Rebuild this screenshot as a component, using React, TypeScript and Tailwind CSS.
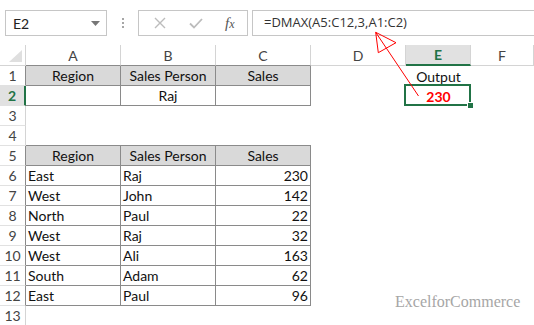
import React from 'react';

type Align = 'left' | 'center' | 'right';

interface CellDef {
    text?: string;
    align?: Align;
    head?: boolean;
    boxed?: boolean;
    edge?: boolean; // dark line under a cell sitting right above a table
}

const colWidths = ['w-[95px]', 'w-[95px]', 'w-[95px]', 'w-[95px]', 'w-[65px]', 'flex-1'];
const colLetters = ['A', 'B', 'C', 'D', 'E', 'F'];

const salesData = [
    { region: 'East', person: 'Raj', sales: 230 },
    { region: 'West', person: 'John', sales: 142 },
    { region: 'North', person: 'Paul', sales: 22 },
    { region: 'West', person: 'Raj', sales: 32 },
    { region: 'West', person: 'Ali', sales: 163 },
    { region: 'South', person: 'Adam', sales: 62 },
    { region: 'East', person: 'Paul', sales: 96 },
];

function alignClass(align?: Align) {
    if (align === 'center') return 'justify-center';
    if (align === 'right') return 'justify-end pr-[2px]';
    return 'justify-start pl-[2px]';
}

function Cell({ def, width }: { def: CellDef; width: string }) {
    let cls = `${width} shrink-0 flex items-center overflow-hidden whitespace-nowrap ${alignClass(def.align)}`;
    if (def.boxed) cls += ' border-r border-b border-[#8a8a8a]';
    if (def.head) cls += ' bg-[#d9d9d9]';
    if (def.edge) cls += ' border-b border-[#8a8a8a]';
    return <div className={cls}>{def.text}</div>;
}

function SheetRow({ n, cells, boxed, selected, children }: {
    n: number;
    cells: CellDef[];
    boxed?: boolean;
    selected?: boolean;
    children?: React.ReactNode;
}) {
    const hdr = selected
        ? 'bg-[#e1e1e1] text-[#217346] font-bold border-r-2 border-r-[#217346]'
        : boxed
            ? 'text-[#444] border-r border-r-[#8a8a8a]'
            : 'text-[#444] border-r border-r-[#d4d4d4]';
    return (
        <div className="flex h-[20px]">
            <div className={`w-[26px] shrink-0 flex items-center justify-center border-b border-b-[#e1e1e1] ${hdr}`}>
                {n}
            </div>
            {cells.slice(0, 4).map((c, i) => (
                <Cell key={i} def={c} width={colWidths[i]} />
            ))}
            {children ?? <Cell def={cells[4] || {}} width={colWidths[4]} />}
            <Cell def={{}} width={colWidths[5]} />
        </div>
    );
}

function FormulaBar() {
    return (
        <div className="flex h-[45px] items-start pt-[10px] pl-[5px] bg-white">
            {/* name box */}
            <div className="w-[102px] h-[26px] border border-[#c6c6c6] flex items-center justify-between pl-[7px] pr-[6px] text-[14px] text-[#222]">
                <span>E2</span>
                <svg width="9" height="5" viewBox="0 0 9 5"><path d="M0 0h9L4.5 5z" fill="#777" /></svg>
            </div>
            <div className="w-[31px] h-[26px] flex flex-col items-center justify-center gap-[2px]">
                <span className="w-[2px] h-[2px] bg-[#a6a6a6]" />
                <span className="w-[2px] h-[2px] bg-[#a6a6a6]" />
                <span className="w-[2px] h-[2px] bg-[#a6a6a6]" />
            </div>
            {/* cancel / enter / insert function */}
            <div className="w-[110px] h-[26px] border border-[#c6c6c6] flex items-center pl-[14px]">
                <svg width="12" height="12" viewBox="0 0 12 12" className="ml-[1px]">
                    <path d="M1 1l10 10M11 1L1 11" stroke="#bcbcbc" strokeWidth="1.4" />
                </svg>
                <svg width="14" height="11" viewBox="0 0 14 11" className="ml-[23px]">
                    <path d="M1 5.5l4 4L13 1" stroke="#bcbcbc" strokeWidth="1.8" fill="none" />
                </svg>
                <span className="ml-[22px] font-['Liberation_Serif',serif] italic text-[15px] text-[#555] leading-none">
                    f<span className="text-[12px]">x</span>
                </span>
            </div>
            <div className="flex-1 h-[26px] ml-[4px] border-y border-l border-[#c6c6c6] flex items-center pl-[11px] font-['Open_Sans',sans-serif] text-[13px] text-[#333]">
                =DMAX(A5:C12,3,A1:C2)
            </div>
        </div>
    );
}

function ColumnHeaders() {
    return (
        <div className="flex h-[21px] text-[#444]">
            <div className="w-[26px] shrink-0 border-r border-b border-[#d4d4d4] relative flex items-end justify-end pr-[3px] pb-[3px]">
                <svg width="13" height="12" viewBox="0 0 13 12"><path d="M13 0V12H0z" fill="#dfdfdf" /></svg>
            </div>
            {colLetters.map((l, i) => {
                let cls = `${colWidths[i]} shrink-0 flex items-center justify-center`;
                if (i < 3) cls += ' border-r border-r-[#d4d4d4] border-b border-b-[#8a8a8a]';
                else if (i === 4) cls += ' border-r border-r-[#d4d4d4] bg-[#e1e1e1] border-b-2 border-b-[#217346] text-[#217346] font-bold';
                else cls += ' border-r border-[#d4d4d4] border-b';
                return <div key={l} className={cls}>{l}</div>;
            })}
        </div>
    );
}

export default function App() {
    const criteriaHead: CellDef[] = [
        { text: 'Region', align: 'center', head: true, boxed: true },
        { text: 'Sales Person', align: 'center', head: true, boxed: true },
        { text: 'Sales', align: 'center', head: true, boxed: true },
        {},
        { text: 'Output', align: 'center' },
    ];
    const criteriaRow: CellDef[] = [
        { boxed: true },
        { text: 'Raj', align: 'center', boxed: true },
        { boxed: true },
        {},
    ];
    const tableHead: CellDef[] = [
        { text: 'Region', align: 'center', head: true, boxed: true },
        { text: 'Sales Person', align: 'center', head: true, boxed: true },
        { text: 'Sales', align: 'center', head: true, boxed: true },
    ];

    return (
        <div className="relative w-[534px] h-[325px] overflow-hidden bg-white font-['Lato',sans-serif] text-[14px] text-[#111]">
            <FormulaBar />
            <ColumnHeaders />
            <SheetRow n={1} cells={criteriaHead} boxed />
            <SheetRow n={2} cells={criteriaRow} boxed selected>
                <div className="w-[65px] shrink-0 relative flex items-center justify-center font-bold text-[#ff0000]">
                    230
                    {/* active cell outline + fill handle */}
                    <div className="absolute left-[-2px] top-[-2px] w-[67px] h-[22px] border-2 border-[#217346]" />
                    <div className="absolute left-[61px] top-[16px] w-[7px] h-[7px] bg-[#217346] border border-white" />
                </div>
            </SheetRow>
            <SheetRow n={3} cells={[]} />
            <SheetRow n={4} cells={[{ edge: true }, { edge: true }, { edge: true }]} />
            <SheetRow n={5} cells={tableHead} boxed />
            {salesData.map((r, i) => (
                <SheetRow
                    key={i}
                    n={6 + i}
                    boxed
                    cells={[
                        { text: r.region, boxed: true },
                        { text: r.person, boxed: true },
                        { text: String(r.sales), align: 'right', boxed: true },
                    ]}
                />
            ))}
            <SheetRow n={13} cells={[]} />

            {/* watermark */}
            <div className="absolute left-[395px] top-[290px] font-['Liberation_Serif',serif] text-[16px] text-[#a6a6a6]">
                ExcelforCommerce
            </div>

            {/* annotation arrow */}
            <svg className="absolute inset-0 pointer-events-none" width="534" height="325">
                <line x1="418.5" y1="96" x2="375.7" y2="32.3" stroke="#ff0000" strokeWidth="1" />
                <polygon points="375.7,32.3 396,42.7 378.3,52.7" fill="none" stroke="#ff0000" strokeWidth="1" />
            </svg>
        </div>
    );
}
